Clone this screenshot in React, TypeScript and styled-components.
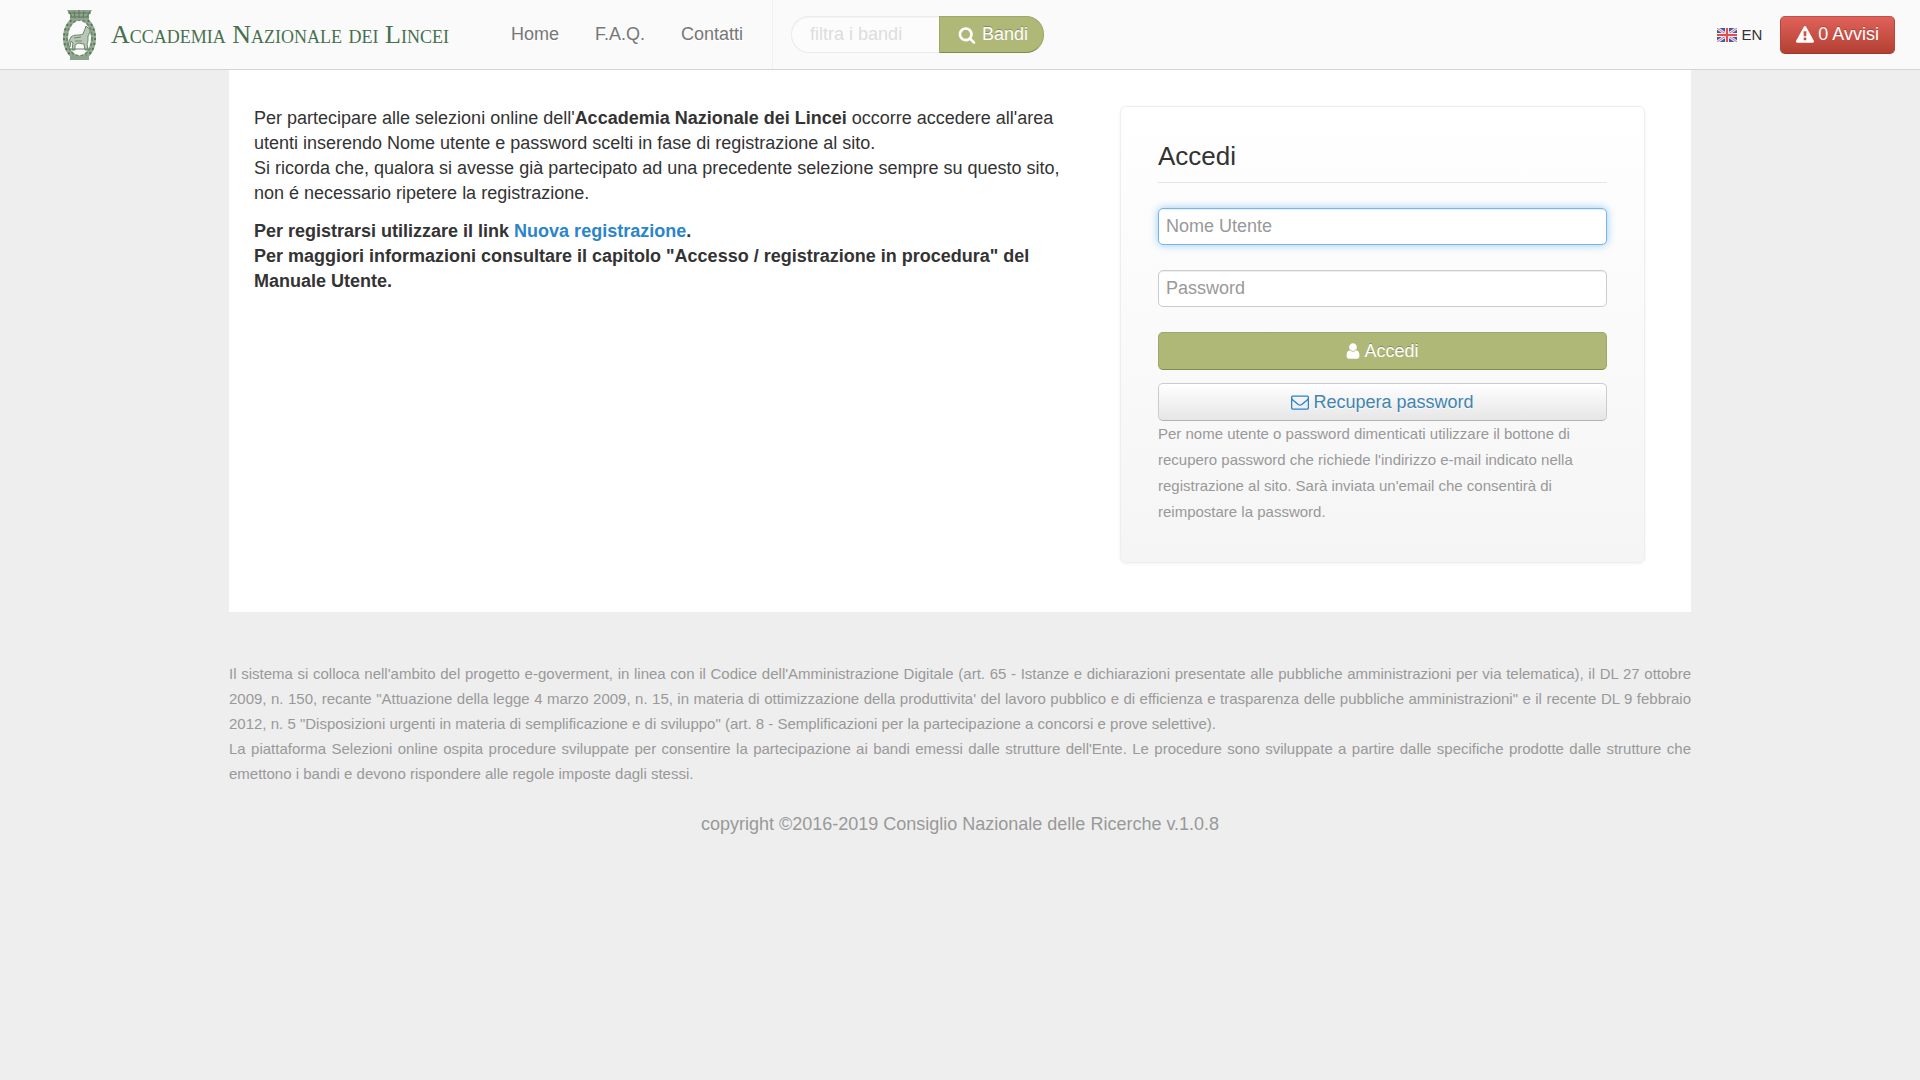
import React from "react";
import styled, { createGlobalStyle, css } from "styled-components";

const GlobalStyle = createGlobalStyle`
  *, *::before, *::after { box-sizing: border-box; }
  body {
    margin: 0;
    background: #eee;
    color: #333;
    font: 18px/25px "Liberation Sans", Arial, sans-serif;
  }
  p, h1, h3 { margin: 0; }
  input, button { font: inherit; }
`;

const Navbar = styled.header`
  display: flex;
  align-items: center;
  min-height: 70px;
  padding: 0 25px 0 62px;
  background: #fafafa;
  border-bottom: 1px solid #d4d4d4;
`;

const Brand = styled.a`
  display: flex;
  align-items: center;
  gap: 14px;
  width: 431px;
  color: #47704f;
  text-decoration: none;
  white-space: nowrap;
`;

const BrandName = styled.span`
  font-family: "Liberation Serif", "Times New Roman", serif;
  font-size: 26px;
  line-height: 50px;
  font-variant: small-caps;
`;

const Seal = styled.svg`
  flex: none;
  width: 35px;
  height: 50px;
`;

const Menu = styled.nav`
  display: flex;
  align-self: stretch;
  align-items: center;
  padding-right: 11px;
  border-right: 1px solid #f0f0f0;
`;

const MenuLink = styled.a`
  padding: 0 18px;
  color: #777;
  text-decoration: none;
  text-shadow: 0 1px 0 #fff;
`;

const SearchForm = styled.form`
  display: flex;
  margin-left: 18px;
`;

const buttonBase = css`
  display: inline-flex;
  align-items: center;
  justify-content: center;
  gap: 4px;
  height: 38px;
  padding: 0 15px;
  border: 1px solid;
  border-radius: 5px;
  cursor: pointer;
`;

const SearchInput = styled.input`
  width: 148px;
  height: 37px;
  padding: 0 18px;
  border: 1px solid #ebebeb;
  border-right: 0;
  border-radius: 18px 0 0 18px;
  background: #fcfcfc;
  box-shadow: inset 0 1px 1px rgba(0, 0, 0, 0.03);
  outline: 0;
  &::placeholder { color: #ddd; opacity: 1; }
`;

const OliveButton = styled.button<{ $rounded?: boolean }>`
  ${buttonBase}
  color: #fff;
  background: #afb877;
  border-color: #9ea668 #9ea668 #828a4c;
  text-shadow: 0 -1px 0 rgba(0, 0, 0, 0.25);
  ${({ $rounded }) =>
    $rounded &&
    css`
      height: 37px;
      gap: 6px;
      padding-left: 18px;
      border-radius: 0 18px 18px 0;
    `}
`;

const RedButton = styled.button`
  ${buttonBase}
  color: #fff;
  background: linear-gradient(#e0625a, #b34033);
  border-color: #c2504a #b5453d #9c3a30;
  text-shadow: 0 -1px 0 rgba(0, 0, 0, 0.25);
`;

const LightButton = styled.button`
  ${buttonBase}
  color: #4285b0;
  background: linear-gradient(#fff, #e6e6e6);
  border-color: #ccc #ccc #b3b3b3;
  text-shadow: 0 1px 1px rgba(255, 255, 255, 0.75);
  svg { color: #2a85cc; }
`;

const Tools = styled.div`
  display: flex;
  align-items: center;
  gap: 18px;
  margin-left: auto;
`;

const Language = styled.a`
  display: flex;
  align-items: center;
  gap: 4px;
  color: #333;
  font-size: 15px;
  text-decoration: none;
`;

const Shell = styled.div`
  max-width: 1462px;
  margin: 0 auto;
`;

const Main = styled.main`
  display: grid;
  grid-template-columns: minmax(0, 1fr) 525px;
  align-items: start;
  gap: 50px;
  padding: 36px 46px 49px 25px;
  background: #fff;
`;

const Intro = styled.section`
  display: grid;
  gap: 13px;
`;

const TextLink = styled.a`
  color: #2a85cc;
  text-decoration: none;
`;

const Card = styled.form`
  display: flex;
  flex-direction: column;
  padding: 36px 37px 37px;
  border: 1px solid #eee;
  border-radius: 6px;
  background: linear-gradient(#fff, #f5f5f5);
  box-shadow: 0 1px 3px rgba(0, 0, 0, 0.06);
`;

const CardTitle = styled.h3`
  margin-bottom: 25px;
  padding-bottom: 13px;
  border-bottom: 1px solid #e5e5e5;
  font-size: 26px;
  line-height: 26px;
  font-weight: 400;
`;

const Field = styled.input`
  width: 100%;
  height: 37px;
  margin-bottom: 25px;
  padding: 0 7px;
  border: 1px solid #ccc;
  border-radius: 5px;
  background: #fff;
  color: #555;
  box-shadow: inset 0 1px 1px rgba(0, 0, 0, 0.075);
  &::placeholder { color: #999; opacity: 1; }
  &:focus {
    outline: 0;
    border-color: #75b5ee;
    box-shadow: inset 0 1px 1px rgba(0, 0, 0, 0.075), 0 0 8px rgba(82, 168, 236, 0.6);
  }
`;

const Actions = styled.div`
  display: grid;
  gap: 13px;
`;

const Help = styled.p`
  color: #999;
  font-size: 15px;
  line-height: 26px;
`;

const Footer = styled.footer`
  padding: 49px 0 25px;
  color: #999;
`;

const Legal = styled.p`
  margin-bottom: 26px;
  font-size: 15px;
  text-align: justify;
`;

const Copyright = styled.p`
  text-align: center;
`;

const paths = {
  search:
    "M1216 832q0-185-131.5-316.5t-316.5-131.5-316.5 131.5-131.5 316.5 131.5 316.5 316.5 131.5 316.5-131.5 131.5-316.5zm512 832q0 52-38 90t-90 38q-54 0-90-38l-343-342q-179 124-399 124-143 0-273.5-55.5t-225-150-150-225-55.5-273.5 55.5-273.5 150-225 225-150 273.5-55.5 273.5 55.5 225 150 150 225 55.5 273.5q0 220-124 399l343 343q37 37 37 90z",
  user: "M1536 1399q0 109-62.5 187t-150.5 78h-854q-88 0-150.5-78t-62.5-187q0-85 8.5-160.5t31.5-152 58.5-131 94-89 134.5-34.5q131 128 313 128t313-128q76 0 134.5 34.5t94 89 58.5 131 31.5 152 8.5 160.5zm-256-887q0 159-112.5 271.5t-271.5 112.5-271.5-112.5-112.5-271.5 112.5-271.5 271.5-112.5 271.5 112.5 112.5 271.5z",
  mail: "M1664 1504v-768q-32 36-69 66-268 206-426 338-51 43-83 67t-86.5 48.5-102.5 24.5h-2q-48 0-102.5-24.5t-86.5-48.5-83-67q-158-132-426-338-37-30-69-66v768q0 13 9.5 22.5t22.5 9.5h1472q13 0 22.5-9.5t9.5-22.5zm0-1051v-24.5l-.5-13-3-12.5-5.5-9-9-7.5-14-2.5h-1472q-13 0-22.5 9.5t-9.5 22.5q0 168 147 284 193 152 401 317 6 5 35 29.5t46 37.5 44.5 31.5 50.5 27.5 43 9h2q20 0 43-9t50.5-27.5 44.5-31.5 46-37.5 35-29.5q208-165 401-317 54-43 100.5-115.5t46.5-131.5zm128-37v1088q0 66-47 113t-113 47h-1472q-66 0-113-47t-47-113v-1088q0-66 47-113t113-47h1472q66 0 113 47t47 113z",
  warning:
    "M1024 1375v-190q0-14-9.5-23.5t-22.5-9.5h-192q-13 0-22.5 9.5t-9.5 23.5v190q0 14 9.5 23.5t22.5 9.5h192q13 0 22.5-9.5t9.5-23.5zm-2-374l18-459q0-12-10-19-13-11-24-11h-220q-11 0-24 11-10 7-10 21l17 457q0 10 10 16.5t24 6.5h185q14 0 23.5-6.5t10.5-16.5zm-14-934l768 1408q35 63-2 126-17 29-46.5 46t-63.5 17h-1536q-34 0-63.5-17t-46.5-46q-37-63-2-126l768-1408q17-31 47-49t65-18 65 18 47 49z",
};

function Icon({ name, crop = 0 }: { name: keyof typeof paths; crop?: number }) {
  return (
    <svg
      width={18 - crop}
      height="18"
      viewBox={`${crop * 50} 0 ${1792 - crop * 100} 1792`}
      fill="currentColor"
      aria-hidden="true"
    >
      <path d={paths[name]} />
    </svg>
  );
}

/* Lynx inside a laurel wreath, under a crown */
function LynxSeal() {
  return (
    <Seal viewBox="0 0 35 50" aria-hidden="true" fill="none">
      <ellipse cx="17.5" cy="28" rx="14" ry="20" stroke="#93aa90" strokeWidth="5" />
      <ellipse cx="17.5" cy="28" rx="15.5" ry="21" stroke="#56735a" strokeWidth="2" strokeDasharray="2 3" />
      <ellipse cx="17.5" cy="28" rx="12.5" ry="18" stroke="#6d8b6e" strokeWidth="2" strokeDasharray="3 2" />
      <path d="M5 0h25l-3 5v5H8V5z" fill="#8fa48d" />
      <path d="M7 1l3 6M12 1l1 7M17 0v8M22 1l-1 7M28 1l-3 6M6 3h23M8 7h19" stroke="#5d795c" strokeWidth="1" />
      <path d="M8 46h19v4H8z" fill="#8fa48d" />
      <path
        d="M9 27c3-3 8-1 12-3l2-5 1-3 2 2 2 1v3l-2 4c0 4 0 6-1 8l1 6h-3l-1-6-6-1-3 2v5h-3l1-7-2-2-1 6H6l1-6z"
        fill="#b9c8b6"
        stroke="#6d876c"
        strokeWidth="1"
      />
      <path d="M12 28l7-1M13 31h7M9 39h17" stroke="#6d876c" strokeWidth="1" />
    </Seal>
  );
}

function UnionFlag() {
  return (
    <svg width="20" height="14" viewBox="0 0 20 14" aria-hidden="true">
      <path d="M0 0h20v14H0z" fill="#3f5ba8" />
      <path d="M0 0l20 14M20 0L0 14" stroke="#e9dfea" strokeWidth="3" />
      <path d="M0 0l20 14M20 0L0 14" stroke="#dc8084" strokeWidth="1" />
      <path d="M10 0v14M0 7h20" stroke="#f6e9ec" strokeWidth="4" />
      <path d="M10 0v14M0 7h20" stroke="#e0504f" strokeWidth="2" />
    </svg>
  );
}

export default function App() {
  return (
    <>
      <GlobalStyle />
      <Navbar>
        <Brand href="#">
          <LynxSeal />
          <BrandName>Accademia Nazionale dei Lincei</BrandName>
        </Brand>
        <Menu>
          <MenuLink href="#">Home</MenuLink>
          <MenuLink href="#">F.A.Q.</MenuLink>
          <MenuLink href="#">Contatti</MenuLink>
        </Menu>
        <SearchForm role="search" onSubmit={(e) => e.preventDefault()}>
          <SearchInput type="text" placeholder="filtra i bandi" aria-label="filtra i bandi" />
          <OliveButton $rounded type="submit">
            <Icon name="search" /> Bandi
          </OliveButton>
        </SearchForm>
        <Tools>
          <Language href="#">
            <UnionFlag /> EN
          </Language>
          <RedButton type="button">
            <Icon name="warning" /> 0 Avvisi
          </RedButton>
        </Tools>
      </Navbar>
      <Shell>
        <Main>
          <Intro>
            <p>
              Per partecipare alle selezioni online dell'<b>Accademia Nazionale dei Lincei</b> occorre
              accedere all'area utenti inserendo Nome utente e password scelti in fase di registrazione al
              sito.
              <br />
              Si ricorda che, qualora si avesse già partecipato ad una precedente selezione sempre su questo
              sito, non é necessario ripetere la registrazione.
            </p>
            <p>
              <b>
                Per registrarsi utilizzare il link <TextLink href="#">Nuova registrazione</TextLink>.
                <br />
                Per maggiori informazioni consultare il capitolo "Accesso / registrazione in procedura" del
                Manuale Utente.
              </b>
            </p>
          </Intro>
          <Card onSubmit={(e) => e.preventDefault()}>
            <CardTitle>Accedi</CardTitle>
            <Field type="text" placeholder="Nome Utente" aria-label="Nome Utente" autoFocus />
            <Field type="password" placeholder="Password" aria-label="Password" />
            <Actions>
              <OliveButton type="submit">
                <Icon name="user" crop={4} /> Accedi
              </OliveButton>
              <LightButton type="button">
                <Icon name="mail" /> Recupera password
              </LightButton>
            </Actions>
            <Help>
              Per nome utente o password dimenticati utilizzare il bottone di recupero password che richiede
              l'indirizzo e-mail indicato nella registrazione al sito. Sarà inviata un'email che consentirà di
              reimpostare la password.
            </Help>
          </Card>
        </Main>
        <Footer>
          <Legal>
            Il sistema si colloca nell'ambito del progetto e-goverment, in linea con il Codice
            dell'Amministrazione Digitale (art. 65 - Istanze e dichiarazioni presentate alle pubbliche
            amministrazioni per via telematica), il DL 27 ottobre 2009, n. 150, recante "Attuazione della
            legge 4 marzo 2009, n. 15, in materia di ottimizzazione della produttivita' del lavoro pubblico e
            di efficienza e trasparenza delle pubbliche amministrazioni" e il recente DL 9 febbraio 2012, n. 5
            "Disposizioni urgenti in materia di semplificazione e di sviluppo" (art. 8 - Semplificazioni per
            la partecipazione a concorsi e prove selettive).
            <br />
            La piattaforma Selezioni online ospita procedure sviluppate per consentire la partecipazione ai
            bandi emessi dalle strutture dell'Ente. Le procedure sono sviluppate a partire dalle specifiche
            prodotte dalle strutture che emettono i bandi e devono rispondere alle regole imposte dagli
            stessi.
          </Legal>
          <Copyright>copyright ©2016-2019 Consiglio Nazionale delle Ricerche v.1.0.8</Copyright>
        </Footer>
      </Shell>
    </>
  );
}
